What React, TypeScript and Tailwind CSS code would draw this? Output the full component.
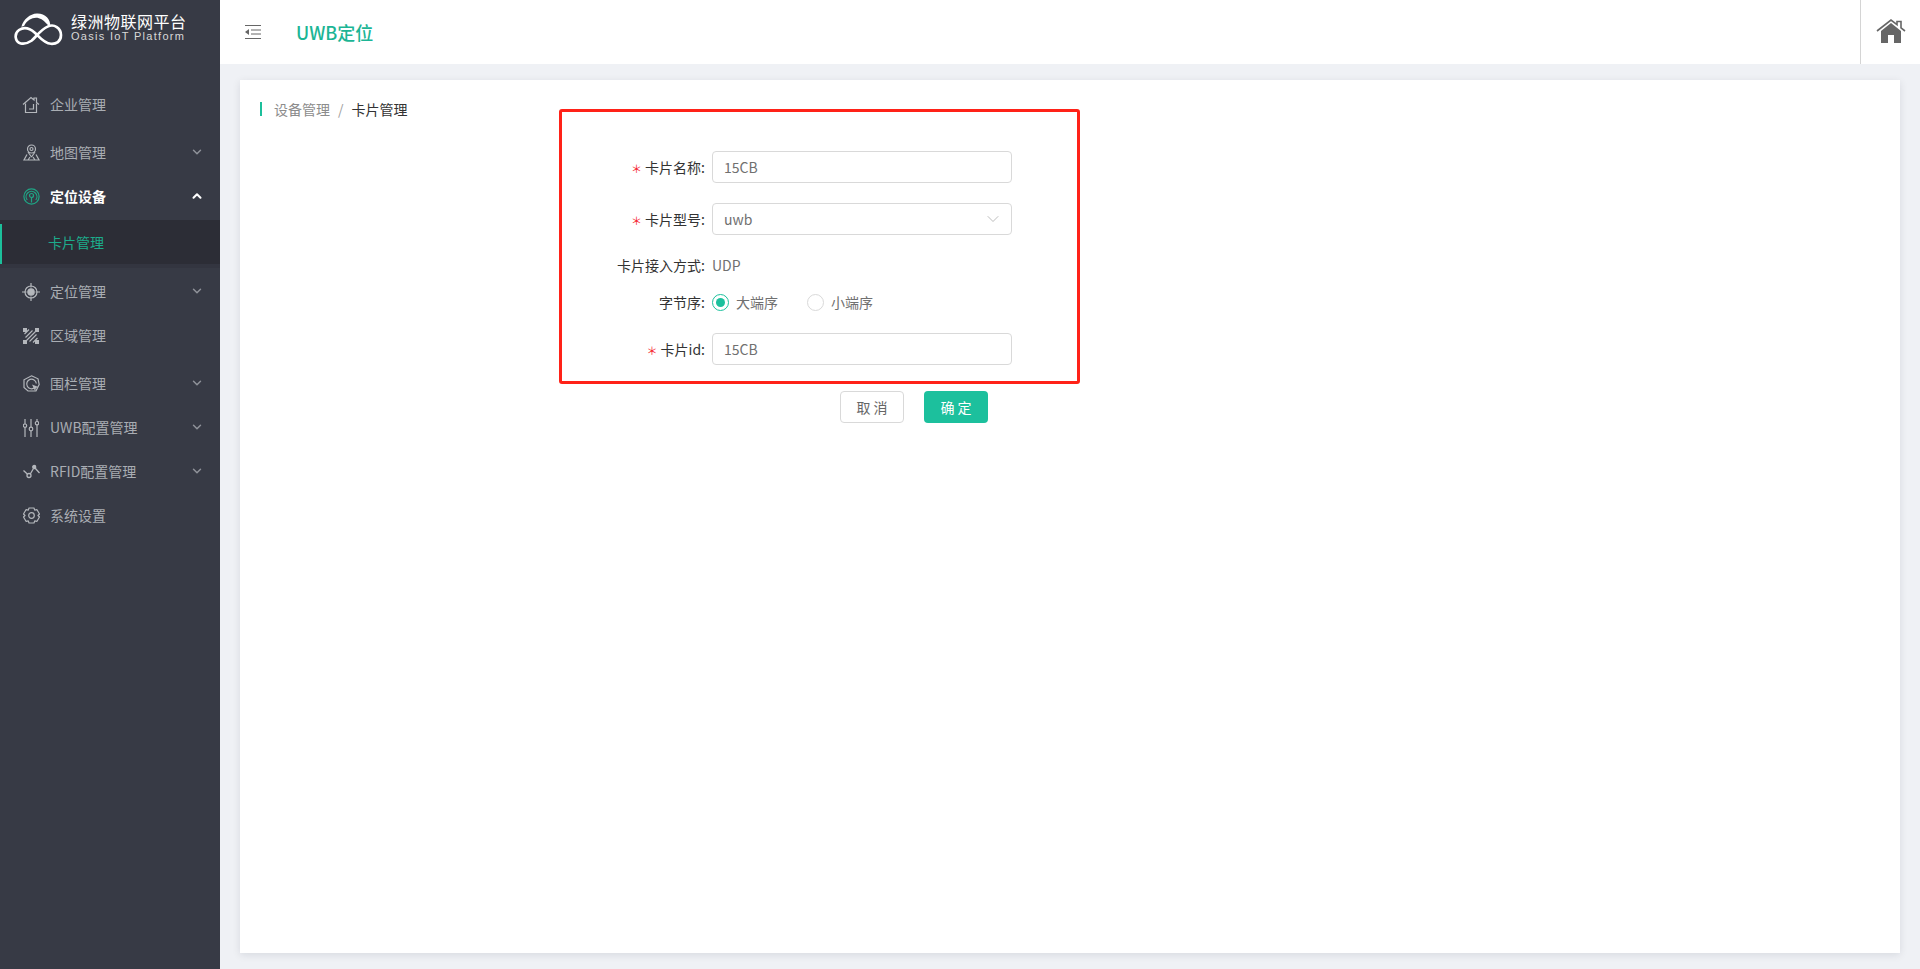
import { ChevronDown, ChevronUp } from 'lucide-react'
import type { ReactNode } from 'react'

const font = { fontFamily: '"Noto Sans CJK SC", "Liberation Sans", sans-serif' }

function Logo() {
  return (
    <svg width="49" height="33" viewBox="0 0 146 97" fill="none">
      <path
        d="M52 82C65 72 78 50 100 40C120 30 140 45 140 65C140 85 125 92 110 91C90 90 75 70 62 58C48 46 30 40 15 50C0 60 2 85 20 90C32 93 43 88 52 82Z"
        stroke="#fff"
        strokeWidth="8"
      />
      <path d="M22 40C28 18 48 2 68 1C92 0 110 18 108 40C100 36 92 24 82 18C66 8 42 14 30 38Z" fill="#fff" />
    </svg>
  )
}

const HouseIcon = (
  <svg width="18" height="18" viewBox="0 0 18 18" fill="none" stroke="currentColor" strokeWidth="1.2">
    <path d="M1 8.500 9 1.500l3 2.500V2h2.500v4.500L17 8.500" />
    <path d="M3.500 7.500v9h11v-9" />
    <path d="M11.500 8v5H7" />
  </svg>
)
const MapIcon = (
  <svg width="17" height="17" viewBox="0 0 17 17" fill="none" stroke="currentColor" strokeWidth="1.2">
    <circle cx="8.500" cy="5" r="4" />
    <circle cx="8.500" cy="5" r="1.500" />
    <path d="M8.500 13 5 8M8.500 13 12 8M4 10.500 1 16h15l-3-5.500M5 16l2-3M10 13l2 3" />
  </svg>
)
const SignalIcon = (
  <svg width="17" height="17" viewBox="0 0 17 17" fill="none" stroke="currentColor" strokeWidth="1.2">
    <circle cx="8.500" cy="8.500" r="7.600" />
    <path d="M4.200 12a5.400 5.400 0 1 1 8.600 0" />
    <circle cx="8.500" cy="7.500" r="2" />
    <path d="M8.500 9.500v5" />
  </svg>
)
const TargetIcon = (
  <svg width="18" height="18" viewBox="0 0 18 18" fill="none" stroke="currentColor" strokeWidth="1.2">
    <circle cx="9" cy="9" r="6" />
    <circle cx="9" cy="9" r="3.200" fill="currentColor" />
    <path d="M9 0v4.500M9 13.500V18M0 9h4.500M13.500 9H18" />
  </svg>
)
const AreaIcon = (
  <svg width="18" height="18" viewBox="0 0 18 18" fill="none" stroke="currentColor">
    <path d="M1 1h4v4H1zM13 1h4v4h-4zM1 13h4v4H1zM13 13h4v4h-4z" fill="currentColor" stroke="none" />
    <path d="M3.500 10.500 10.500 3.500M4.500 13.500l9-9M7.500 14.500l7-7M2.500 7 7 2.500M11 15.500l4.500-4.500" strokeWidth="1.200" />
  </svg>
)
const FenceIcon = (
  <svg width="17" height="17" viewBox="0 0 17 17" fill="none" stroke="currentColor" strokeWidth="1.2">
    <path d="M8.500.8 15 3.800 16.200 9.500 13 15.800 5 16 1 12.500V4.800z" />
    <path d="M11.800 12.500A4.800 4.800 0 1 1 13.300 8.500" />
    <path d="m9 9.500 6.500 2.500-2.500 1-1 3z" fill="currentColor" stroke="none" />
  </svg>
)
const SlidersIcon = (
  <svg width="16" height="18" viewBox="0 0 16 18" fill="none" stroke="currentColor" strokeWidth="1.2">
    <path d="M2 0v5M2 8.500V18M8 0v8M8 12v6M14 0v2.500M14 6v12" />
    <circle cx="2" cy="6.700" r="1.700" />
    <circle cx="8" cy="10" r="1.800" />
    <circle cx="14" cy="4.200" r="1.700" />
  </svg>
)
const WaveIcon = (
  <svg width="17" height="16" viewBox="0 0 17 16" fill="none" stroke="currentColor" strokeWidth="1.3">
    <path d="M.5 6.500 4.300 10M7.300 10 10.500 4.500M12 4l4.500 5" />
    <circle cx="6" cy="11.500" r="2" />
    <circle cx="11.200" cy="3" r="1.500" fill="currentColor" />
  </svg>
)
const GearIcon = (
  <svg width="17" height="17" viewBox="0 0 17 17" fill="none" stroke="currentColor" strokeWidth="1.2">
    <path d="M6 1h5l.7 2.100 2.300-.4L16.500 7 15 8.500l1.500 1.500-2.500 4.300-2.300-.4L11 16H6l-.7-2.100-2.300.4L.5 10 2 8.500.5 7 3 2.700l2.300.4z" strokeLinejoin="round" />
    <circle cx="8.500" cy="8.500" r="2.800" />
  </svg>
)

function MenuRow({ icon, label, chevron, active, className }: { icon: ReactNode; label: string; chevron?: 'up' | 'down'; active?: boolean; className?: string }) {
  return (
    <div className={`flex h-[44px] items-center pl-[22px] pr-[16px] text-[14px] ${active ? 'font-bold text-white' : 'text-[#a9adb3]'} ${className ?? ''}`}>
      <span className={`mr-[10px] flex h-[18px] w-[18px] items-center justify-center pb-[1px] ${active ? 'text-[#1fa585]' : 'text-[#b4b7bc]'}`}>{icon}</span>
      <span className="flex-1 pb-[2px]">{label}</span>
      {chevron === 'down' && <ChevronDown size={14} strokeWidth={2.5} className="mb-[2px] text-[#8f929a]" />}
      {chevron === 'up' && <ChevronUp size={14} strokeWidth={3.5} className="mb-[2px] text-white" />}
    </div>
  )
}

function FormRow({ label, required, children, className }: { label: string; required?: boolean; children: ReactNode; className?: string }) {
  return (
    <div className={`flex items-center ${className ?? ''}`}>
      <label className="w-[152px] pr-[7px] text-right text-[14px] text-[#333333]">
        {required && <span className="mr-[3px] text-[11px] text-[#f5222d]">＊</span>}
        {label}:
      </label>
      {children}
    </div>
  )
}

function TextBox({ value, arrow }: { value: string; arrow?: boolean }) {
  return (
    <div className="flex h-[32px] w-[300px] items-center justify-between rounded border border-[#d9d9d9] pl-[11px] pr-[8px] text-[14px] text-[#707070]">
      <span>{value}</span>
      {arrow && <ChevronDown size={20} strokeWidth={1} className="text-[#b0b0b0]" />}
    </div>
  )
}

export default function App() {
  return (
    <div className="flex h-[969px] w-[1920px] overflow-hidden bg-[#eff1f5]" style={font}>
      <aside className="w-[220px] shrink-0 bg-[#373a45]">
        <div className="flex h-[64px] items-center pl-[14px]">
          <div className="mb-[5px]"><Logo /></div>
          <div className="mb-[10px] ml-[8px] text-white">
            <div className="text-[16px] leading-[18px] tracking-[0.5px]">绿洲物联网平台</div>
            <div className="text-[11px] leading-[12px] tracking-[1.3px] text-[#d8d8d8]" style={{ fontFamily: '"Liberation Sans", sans-serif' }}>Oasis IoT Platform</div>
          </div>
        </div>
        <nav className="pt-[19px]">
          <MenuRow icon={HouseIcon} label="企业管理" />
          <MenuRow icon={MapIcon} label="地图管理" chevron="down" className="mt-1" />
          <MenuRow icon={SignalIcon} label="定位设备" chevron="up" active />
          <div className="mt-[1px] h-[44px] bg-[#2c2d36] pt-[4px]">
            <div className="flex h-[40px] items-center border-l-2 border-[#1cbf9b] pb-[3px] pl-[46px] text-[14px] text-[#1cab8b]">卡片管理</div>
          </div>
          <div className="mb-[2px] h-[4px] bg-[#333540]" />
          <MenuRow icon={TargetIcon} label="定位管理" chevron="down" />
          <MenuRow icon={AreaIcon} label="区域管理" />
          <MenuRow icon={FenceIcon} label="围栏管理" chevron="down" className="mt-1" />
          <MenuRow icon={SlidersIcon} label="UWB配置管理" chevron="down" />
          <MenuRow icon={WaveIcon} label="RFID配置管理" chevron="down" />
          <MenuRow icon={GearIcon} label="系统设置" />
        </nav>
      </aside>
      <div className="flex min-w-0 flex-1 flex-col">
        <header className="flex h-[64px] items-center bg-white">
          <svg className="ml-[25px]" width="16" height="14" viewBox="0 0 16 14" fill="none" stroke="#666666">
            <path d="M0 .5h16M6 5h10M6 9h10M0 13.500h16" />
            <path d="M0 7l4-3v6z" fill="#666666" stroke="none" />
          </svg>
          <span className="ml-[35px] text-[18px] font-medium text-[#1cb595]">UWB定位</span>
          <div className="ml-auto flex h-full w-[60px] items-center justify-center border-l border-[#d4d4d4]">
            <svg width="30" height="26" viewBox="0 0 30 26" className="mt-[-2px]">
              <path d="M1 13 15 2l6 4.700V3.500h4v6.400l4 3.100" fill="none" stroke="#666666" strokeWidth="1.6" />
              <path d="M15 5 5 13v12h7v-8h6v8h7V13z" fill="#666666" />
            </svg>
          </div>
        </header>
        <main className="mx-[20px] mt-[16px] h-[873px] bg-white px-[20px] pt-[22px] shadow-[0_2px_8px_rgba(0,21,41,0.1)]">
          <div className="flex items-center text-[14px] leading-[14px]">
            <span className="mr-[12px] h-[14px] w-[2px] bg-[#1cbf9b]" />
            <span className="text-[#8c8c8c]">设备管理</span>
            <span className="mx-[8px] text-[#a0a0a0]">/</span>
            <span className="text-[#333333]">卡片管理</span>
          </div>
          <div className="relative mt-[-7px]">
            <div className="absolute left-[299px] top-0 h-[275px] w-[521px] rounded-[3px] border-[3px] border-[#ff2218]" />
            <div className="pl-[300px] pt-[42px]">
              <FormRow label="卡片名称" required><TextBox value="15CB" /></FormRow>
              <FormRow label="卡片型号" required className="mt-[20px]"><TextBox value="uwb" arrow /></FormRow>
              <FormRow label="卡片接入方式" className="mt-[20px] h-[20px]"><span className="text-[14px] text-[#707070]">UDP</span></FormRow>
              <FormRow label="字节序" className="mt-[17px] h-[20px]">
                <span className="flex items-center text-[14px] text-[#707070]">
                  <span className="mr-[7px] flex h-[17px] w-[17px] items-center justify-center rounded-full border border-[#1cc09d]">
                    <span className="h-[9px] w-[9px] rounded-full bg-[#1cc09d]" />
                  </span>
                  大端序
                  <span className="ml-[29px] mr-[7px] h-[17px] w-[17px] rounded-full border border-[#d9d9d9]" />
                  小端序
                </span>
              </FormRow>
              <FormRow label="卡片id" required className="mt-[21px]"><TextBox value="15CB" /></FormRow>
            </div>
            <div className="mt-[26px] flex pl-[580px]">
              <button className="h-[32px] w-[64px] rounded border border-[#d9d9d9] bg-white text-[14px] text-[#666666]">取 消</button>
              <button className="ml-[20px] h-[32px] w-[64px] rounded bg-[#1cc09d] text-[14px] text-white">确 定</button>
            </div>
          </div>
        </main>
      </div>
    </div>
  )
}
